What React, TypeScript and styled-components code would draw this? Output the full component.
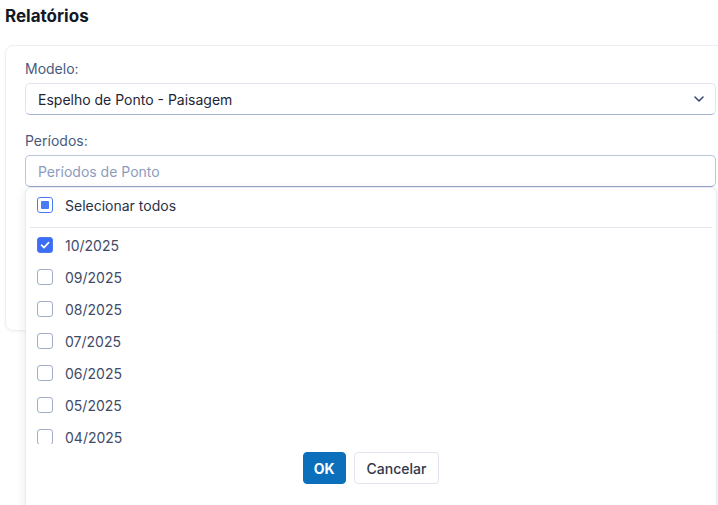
import { useState } from "react";
import styled, { createGlobalStyle } from "styled-components";

const GlobalStyle = createGlobalStyle`
  html, body {
    margin: 0;
    padding: 0;
    background: #ffffff;
    font-family: Inter, "Noto Sans", sans-serif;
  }
`;

const periodos = [
  "10/2025",
  "09/2025",
  "08/2025",
  "07/2025",
  "06/2025",
  "05/2025",
  "04/2025",
];

function Check(props: { state: "on" | "off" | "partial" }) {
  return (
    <Box $state={props.state}>
      {props.state === "on" ? (
        <svg width="12" height="12" viewBox="0 0 12 12" fill="none">
          <path
            d="M2.5 6.2 L5 8.6 L9.6 3.6"
            stroke="#ffffff"
            strokeWidth="1.6"
            strokeLinecap="round"
            strokeLinejoin="round"
          />
        </svg>
      ) : null}
      {props.state === "partial" ? <Dot /> : null}
    </Box>
  );
}

function App() {
  const [marcados, setMarcados] = useState<string[]>(["10/2025"]);

  const toggle = (p: string) =>
    setMarcados(
      marcados.includes(p) ? marcados.filter((m) => m !== p) : [...marcados, p],
    );

  const todos =
    marcados.length === periodos.length
      ? "on"
      : marcados.length > 0
        ? "partial"
        : "off";

  return (
    <Page>
      <GlobalStyle />
      <Title>Relatórios</Title>
      <Card>
        <Label>Modelo:</Label>
        <Select>
          <span>Espelho de Ponto - Paisagem</span>
          <svg width="10" height="6" viewBox="0 0 10 6" fill="none">
            <path
              d="M1 1 L5 5 L9 1"
              stroke="#334170"
              strokeWidth="1.5"
              strokeLinecap="round"
              strokeLinejoin="round"
            />
          </svg>
        </Select>
        <Label $top={16}>Períodos:</Label>
        <Field>
          <Input placeholder="Períodos de Ponto" readOnly />
          <Panel>
            <Header
              onClick={() =>
                setMarcados(todos === "on" ? [] : [...periodos])
              }
            >
              <Check state={todos} />
              <span>Selecionar todos</span>
            </Header>
            <Divider />
            <List>
              {periodos.map((p) => (
                <Item key={p} onClick={() => toggle(p)}>
                  <Check state={marcados.includes(p) ? "on" : "off"} />
                  <span>{p}</span>
                </Item>
              ))}
            </List>
            <Footer>
              <Button $primary>OK</Button>
              <Button>Cancelar</Button>
            </Footer>
          </Panel>
        </Field>
      </Card>
    </Page>
  );
}

const Page = styled.div`
  min-height: 505px;
  padding: 0 0 0 5px;
  overflow: hidden;
`;

const Title = styled.h2`
  margin: 0;
  padding-top: 5px;
  font-size: 17px;
  line-height: 22px;
  font-weight: 700;
  color: #111827;
`;

const Card = styled.div`
  margin-top: 18px;
  width: 740px;
  height: 286px;
  box-sizing: border-box;
  padding: 13px 19px 0 19px;
  border: 1px solid #eeeff3;
  border-radius: 8px;
  box-shadow: 0 1px 3px rgba(30, 40, 70, 0.05);
  display: flex;
  flex-direction: column;
`;

const Label = styled.label<{ $top?: number }>`
  margin-top: ${(p) => p.$top ?? 0}px;
  margin-bottom: 4px;
  font-size: 14px;
  line-height: 20px;
  color: #495b7e;
`;

const Select = styled.div`
  width: 691px;
  height: 32px;
  box-sizing: border-box;
  padding: 0 11px 0 12px;
  display: flex;
  align-items: center;
  justify-content: space-between;
  border: 1px solid #e1e4ec;
  border-bottom-color: #a6b0cf;
  border-radius: 5px;
  font-size: 14px;
  color: #1f2535;
`;

const Field = styled.div`
  position: relative;
  width: 691px;
`;

const Input = styled.input`
  width: 100%;
  height: 32px;
  box-sizing: border-box;
  padding: 0 12px;
  border: 1px solid #bcc4da;
  border-bottom-color: #97a4c8;
  border-radius: 5px;
  font-family: inherit;
  font-size: 14px;
  outline: none;
  &::placeholder {
    color: #8b9cc0;
  }
`;

const Panel = styled.div`
  position: absolute;
  top: 32px;
  left: 0;
  width: 692px;
  height: 340px;
  box-sizing: border-box;
  background: #ffffff;
  border: 1px solid #e8eaf2;
  border-radius: 6px;
  box-shadow: 0 3px 10px rgba(30, 40, 80, 0.1);
  display: flex;
  flex-direction: column;
  z-index: 2;
`;

const Header = styled.div`
  height: 34px;
  flex-shrink: 0;
  padding: 0 11px;
  display: flex;
  align-items: center;
  gap: 12px;
  font-size: 14px;
  color: #293247;
  cursor: pointer;
`;

const Divider = styled.div`
  height: 1px;
  flex-shrink: 0;
  margin: 5px 4px 0 4px;
  background: #e4e6ee;
`;

const List = styled.div`
  height: 215px;
  flex-shrink: 0;
  padding-top: 1px;
  overflow: hidden;
`;

const Item = styled.div`
  height: 32px;
  padding: 0 11px;
  display: flex;
  align-items: center;
  gap: 12px;
  font-size: 14px;
  color: #3f4b68;
  cursor: pointer;
`;

const Box = styled.span<{ $state: "on" | "off" | "partial" }>`
  width: 16px;
  height: 16px;
  box-sizing: border-box;
  flex-shrink: 0;
  border-radius: 3px;
  display: flex;
  align-items: center;
  justify-content: center;
  border: 1.5px solid
    ${(p) => (p.$state === "off" ? "#a2acc9" : "#4a7af5")};
  background: ${(p) => (p.$state === "on" ? "#3b6ef4" : "#ffffff")};
`;

const Dot = styled.span`
  width: 8px;
  height: 8px;
  border-radius: 1px;
  background: #4a7af5;
`;

const Footer = styled.div`
  margin-top: 8px;
  display: flex;
  justify-content: center;
  gap: 8px;
`;

const Button = styled.button<{ $primary?: boolean }>`
  height: 32px;
  padding: 0 ${(p) => (p.$primary ? 10 : 12)}px;
  border-radius: 4px;
  font-family: inherit;
  font-size: 14px;
  font-weight: ${(p) => (p.$primary ? 700 : 500)};
  color: ${(p) => (p.$primary ? "#ffffff" : "#30384c")};
  background: ${(p) => (p.$primary ? "#0c6fbb" : "#ffffff")};
  border: 1px solid ${(p) => (p.$primary ? "#0c6fbb" : "#e2e3ee")};
  cursor: pointer;
`;

export default App;
